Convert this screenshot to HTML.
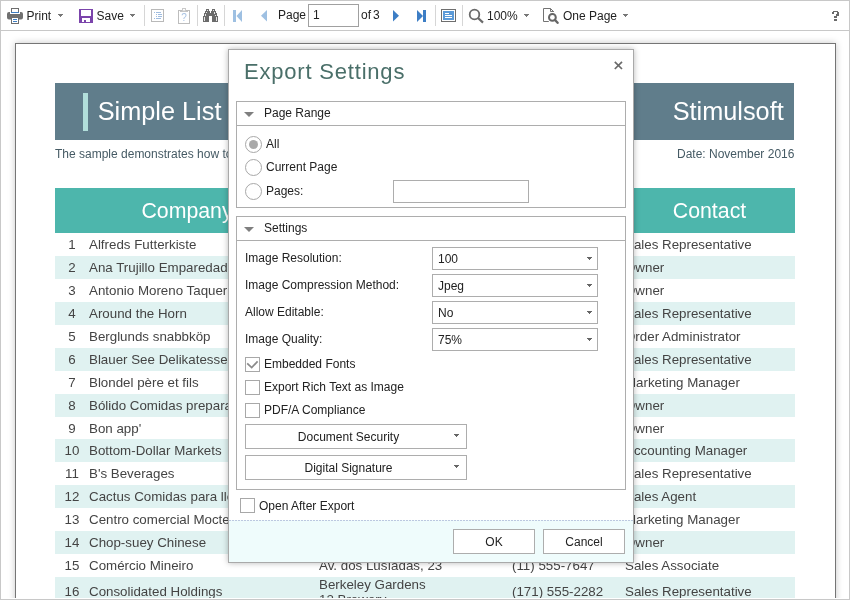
<!DOCTYPE html>
<html><head><meta charset="utf-8">
<style>
*{box-sizing:border-box;margin:0;padding:0}
html,body{width:850px;height:600px;overflow:hidden;background:#fff;font-family:"Liberation Sans",sans-serif}
body{will-change:transform}
.ab{position:absolute}
#frame{position:absolute;left:0;top:0;width:850px;height:600px;border:1px solid #c8c8c8;overflow:hidden}
#tbline{position:absolute;left:0;top:30px;width:850px;height:1px;background:#c8c8c8}
.t{position:absolute;font-size:12px;color:#222;white-space:nowrap;line-height:14px}
.sep{position:absolute;top:5px;width:1px;height:21px;background:#d6d6d6}
.dd{position:absolute;width:5px;height:1px;background:#777}
.dd::before{content:"";position:absolute;left:1px;top:1px;width:3px;height:1px;background:inherit}
.dd::after{content:"";position:absolute;left:2px;top:2px;width:1px;height:1px;background:inherit}
#clip{position:absolute;left:1px;top:31px;width:848px;height:567px;overflow:hidden}
#page{position:absolute;left:14px;top:12px;width:821px;height:700px;border:1px solid #757575;background:#fff;box-shadow:0 0 7px rgba(0,0,0,.22)}
.rt{position:absolute;white-space:nowrap}
.row{position:absolute;left:55px;width:740px;height:23px;font-size:13.33px;color:#444;line-height:23px}
.row span{position:absolute;top:0;white-space:nowrap}
.row .num{left:0;width:34px;text-align:center}
.row .c1{left:34px}
.row .c2{left:264px}
.row .c3{left:457px}
.row .c4{left:570px}
.alt{background:#e0f2f1}
.r16 span{top:7px;line-height:15px}
.r16 .two{top:-0.5px;line-height:15.4px}
#dlg{position:absolute;left:228px;top:49px;width:406px;height:514px;background:#fff;border:1px solid #a9a9a9;box-shadow:0 0 6px rgba(0,0,0,.28)}
.d{position:absolute;font-size:12px;color:#222;white-space:nowrap;line-height:14px}
.grp{position:absolute;border:1px solid #adadad}
.ghd{position:absolute;left:0;top:0;right:0;height:24px;border-bottom:1px solid #adadad}
.tri{position:absolute;width:0;height:0;border-left:5px solid transparent;border-right:5px solid transparent;border-top:5px solid #7f7f7f}
.radio{position:absolute;width:17px;height:17px;border:1px solid #a8a8a8;border-radius:50%;background:#fff}
.chk{position:absolute;width:15px;height:15px;border:1px solid #a8a8a8;background:#fff}
.sel{position:absolute;left:195px;width:166px;height:23px;border:1px solid #adadad;background:#fff}
.sel .d{left:5px;top:3.5px}
.sel .dd{left:154px;top:9px;background:#666}
.btn{position:absolute;border:1px solid #adadad;background:#fff}
</style></head>
<body>
<div id="frame"></div>
<div id="tbline"></div>
<!-- toolbar -->
<svg class="ab" style="left:0;top:0" width="850" height="30">
 <!-- printer -->
 <path d="M7 14 Q7 12 9 12 H10 V14 H20 V12 H21 Q23 12 23 14 V17.5 Q23 19.5 21 19.5 H9 Q7 19.5 7 17.5 Z" fill="#707070"/>
 <rect x="11.5" y="8.5" width="7" height="4" fill="#fff" stroke="#6e6e6e"/>
 <line x1="11" y1="12.5" x2="19" y2="12.5" stroke="#3f7ec2" stroke-width="1"/>
 <rect x="11.5" y="17.5" width="7" height="6" fill="#fff" stroke="#6e6e6e"/>
 <line x1="13" y1="19.5" x2="17" y2="19.5" stroke="#3f7ec2"/>
 <line x1="13" y1="21.5" x2="17" y2="21.5" stroke="#3f7ec2"/>
 <!-- save -->
 <g shape-rendering="crispEdges">
 <rect x="79" y="9" width="14" height="14" fill="#7b44ab"/>
 <rect x="81" y="10" width="10" height="6" fill="#fff"/>
 <rect x="82" y="18" width="8" height="4" fill="#fff"/>
 <rect x="84" y="20" width="2" height="2" fill="#7b44ab"/>
 </g>
 <!-- bookmarks disabled -->
 <rect x="151.5" y="9.5" width="12" height="12" fill="#fff" stroke="#b9b9b9"/>
 <g stroke="#9fbce0" stroke-width="1">
  <line x1="154" y1="12.5" x2="155" y2="12.5"/><line x1="156" y1="12.5" x2="161" y2="12.5"/>
  <line x1="156" y1="14.5" x2="157" y2="14.5"/><line x1="158" y1="14.5" x2="162" y2="14.5"/>
  <line x1="156" y1="16.5" x2="157" y2="16.5"/><line x1="158" y1="16.5" x2="162" y2="16.5"/>
  <line x1="154" y1="18.5" x2="155" y2="18.5"/><line x1="156" y1="18.5" x2="161" y2="18.5"/>
 </g>
 <!-- clipboard disabled -->
 <rect x="178.5" y="10.5" width="11" height="13" fill="#fff" stroke="#bdbdbd"/>
 <rect x="180" y="11" width="8" height="1" fill="#c4c4c4"/>
 <rect x="182.5" y="8.5" width="3" height="2.5" fill="#fff" stroke="#c9c9c9"/>
 <text x="184" y="21" font-size="10" fill="#a9c3e3" text-anchor="middle" font-family="Liberation Sans">?</text>
 <!-- binoculars -->
 <g fill="#6b6b6b" shape-rendering="crispEdges">
  <rect x="206" y="9" width="3" height="2"/>
  <rect x="205" y="11" width="5" height="2"/>
  <rect x="204" y="13" width="6" height="3"/>
  <rect x="203" y="16" width="6" height="6"/>
  <rect x="209" y="13" width="3" height="3"/>
  <rect x="212" y="9" width="3" height="2"/>
  <rect x="211" y="11" width="5" height="2"/>
  <rect x="211" y="13" width="6" height="3"/>
  <rect x="212" y="16" width="6" height="6"/>
 </g>
 <g fill="#e6e6e6" shape-rendering="crispEdges">
  <rect x="207" y="10" width="1" height="1"/>
  <rect x="206" y="12" width="1" height="1"/>
  <rect x="205" y="14" width="1" height="2"/>
  <rect x="204" y="17" width="1" height="4"/>
  <rect x="213" y="10" width="1" height="1"/>
  <rect x="214" y="12" width="1" height="2"/>
  <rect x="215" y="15" width="1" height="1"/>
  <rect x="216" y="17" width="1" height="4"/>
 </g>
 <!-- first / prev disabled -->
 <rect x="233" y="10" width="3" height="12" fill="#9ec0e2"/>
 <polygon points="242,10 242,22 236.5,16" fill="#9ec0e2"/>
 <polygon points="267,10 267,21.5 261,15.75" fill="#9ec0e2"/>
 <!-- next / last -->
 <polygon points="393,10 393,21.5 399,15.75" fill="#3d7ec5"/>
 <polygon points="417,10 417,22 423,16" fill="#3d7ec5"/>
 <rect x="423" y="10" width="3" height="12" fill="#3d7ec5"/>
 <!-- page view -->
 <rect x="441.5" y="9.5" width="14" height="12" fill="#fff" stroke="#6e6e6e"/>
 <rect x="443" y="11" width="11" height="9" fill="#5b9ad8"/>
 <g stroke="#fff"><line x1="445" y1="13.5" x2="449" y2="13.5"/><line x1="445" y1="15.5" x2="452" y2="15.5"/><line x1="445" y1="17.5" x2="452" y2="17.5"/></g>
 <!-- zoom -->
 <circle cx="474.5" cy="14.5" r="4.8" fill="none" stroke="#6a6a6a" stroke-width="1.8"/>
 <line x1="478" y1="18" x2="483" y2="22.6" stroke="#6a6a6a" stroke-width="2.2"/>
 <!-- one page -->
 <path d="M548.8 21.5 H543.5 V8.5 H550.5 L553.8 11.8" fill="none" stroke="#737373"/>
 <path d="M550.5 8.5 V11.5 H553.8" fill="none" stroke="#737373"/>
 <circle cx="552.4" cy="17.4" r="3.4" fill="none" stroke="#666" stroke-width="2"/>
 <line x1="555" y1="20" x2="557.6" y2="22.8" stroke="#666" stroke-width="2.4" stroke-linecap="round"/>
 <!-- help -->
 <g fill="#6a6a6a" shape-rendering="crispEdges"><rect x="833" y="11" width="5" height="1"/><rect x="832" y="12" width="2" height="2"/><rect x="837" y="12" width="2" height="3"/><rect x="836" y="14" width="3" height="2"/><rect x="834" y="16" width="3" height="2"/><rect x="834" y="19" width="3" height="2"/></g>
</svg>
<div class="t" style="left:26.5px;top:9px">Print</div>
<div class="dd" style="left:58px;top:14px"></div>
<div class="t" style="left:96.5px;top:9px">Save</div>
<div class="dd" style="left:130px;top:14px"></div>
<div class="sep" style="left:144px"></div>
<div class="sep" style="left:197px"></div>
<div class="sep" style="left:224px"></div>
<div class="t" style="left:278px;top:8px">Page</div>
<div class="ab" style="left:308px;top:4px;width:51px;height:23px;border:1px solid #a0a0a0;background:#fff"></div>
<div class="t" style="left:313px;top:8px">1</div>
<div class="t" style="left:361px;top:8px">of</div>
<div class="t" style="left:373px;top:8px">3</div>
<div class="sep" style="left:435px"></div>
<div class="sep" style="left:462px"></div>
<div class="t" style="left:487px;top:9px">100%</div>
<div class="dd" style="left:524px;top:14px"></div>
<div class="t" style="left:563px;top:9px">One Page</div>
<div class="dd" style="left:623px;top:14px"></div>

<div id="clip">
 <div id="page">
 </div>
</div>
<!-- report content in body coords, clipped -->
<div class="ab" style="left:16px;top:44px;width:819px;height:554px;overflow:hidden">
 <div class="ab" style="left:-16px;top:-44px;width:850px;height:642px">
  <div class="ab" style="left:55px;top:83px;width:739px;height:57px;background:#607d8b"></div>
  <div class="ab" style="left:83px;top:93px;width:5px;height:38px;background:#b2dfdb"></div>
  <div class="rt" style="left:97.7px;top:97px;font-size:25.3px;line-height:29px;color:#fff">Simple List</div>
  <div class="rt" style="left:672.7px;top:97px;font-size:25.3px;line-height:29px;color:#fff">Stimulsoft</div>
  <div class="rt" style="left:55px;top:147px;font-size:12px;line-height:14px;color:#455a64">The sample demonstrates how to create a simple list report.</div>
  <div class="rt" style="left:677px;top:147px;font-size:12px;line-height:14px;color:#455a64">Date: November 2016</div>
  <div class="ab" style="left:55px;top:188px;width:740px;height:45px;background:#4db6ac"></div>
  <div class="rt" style="left:55px;top:199px;width:264px;text-align:center;font-size:21.3px;line-height:25px;color:#fff">Company</div>
  <div class="rt" style="left:315px;top:199px;width:193px;text-align:center;font-size:21.3px;line-height:25px;color:#fff">Address</div>
  <div class="rt" style="left:508px;top:199px;width:116px;text-align:center;font-size:21.3px;line-height:25px;color:#fff">Phone</div>
  <div class="rt" style="left:624px;top:199px;width:171px;text-align:center;font-size:21.3px;line-height:25px;color:#fff">Contact</div>
<div class="row" style="top:233.07px"><span class="num">1</span><span class="c1">Alfreds Futterkiste</span><span class="c2">Obere Str. 57</span><span class="c3">030-0074321</span><span class="c4">Sales Representative</span></div>
<div class="row alt" style="top:256.0px"><span class="num">2</span><span class="c1">Ana Trujillo Emparedados y helados</span><span class="c2">Avda. de la Constitución 2222</span><span class="c3">(5) 555-4729</span><span class="c4">Owner</span></div>
<div class="row" style="top:278.93px"><span class="num">3</span><span class="c1">Antonio Moreno Taquería</span><span class="c2">Mataderos  2312</span><span class="c3">(5) 555-3932</span><span class="c4">Owner</span></div>
<div class="row alt" style="top:301.86px"><span class="num">4</span><span class="c1">Around the Horn</span><span class="c2">120 Hanover Sq.</span><span class="c3">(171) 555-7788</span><span class="c4">Sales Representative</span></div>
<div class="row" style="top:324.78999999999996px"><span class="num">5</span><span class="c1">Berglunds snabbköp</span><span class="c2">Berguvsvägen  8</span><span class="c3">0921-12 34 65</span><span class="c4">Order Administrator</span></div>
<div class="row alt" style="top:347.72px"><span class="num">6</span><span class="c1">Blauer See Delikatessen</span><span class="c2">Forsterstr. 57</span><span class="c3">0621-08460</span><span class="c4">Sales Representative</span></div>
<div class="row" style="top:370.65px"><span class="num">7</span><span class="c1">Blondel père et fils</span><span class="c2">24, place Kléber</span><span class="c3">88.60.15.31</span><span class="c4">Marketing Manager</span></div>
<div class="row alt" style="top:393.58px"><span class="num">8</span><span class="c1">Bólido Comidas preparadas</span><span class="c2">C/ Araquil, 67</span><span class="c3">(91) 555 22 82</span><span class="c4">Owner</span></div>
<div class="row" style="top:416.51px"><span class="num">9</span><span class="c1">Bon app'</span><span class="c2">12, rue des Bouchers</span><span class="c3">91.24.45.40</span><span class="c4">Owner</span></div>
<div class="row alt" style="top:439.44px"><span class="num">10</span><span class="c1">Bottom-Dollar Markets</span><span class="c2">23 Tsawassen Blvd.</span><span class="c3">(604) 555-4729</span><span class="c4">Accounting Manager</span></div>
<div class="row" style="top:462.37px"><span class="num">11</span><span class="c1">B's Beverages</span><span class="c2">Fauntleroy Circus</span><span class="c3">(171) 555-1212</span><span class="c4">Sales Representative</span></div>
<div class="row alt" style="top:485.29999999999995px"><span class="num">12</span><span class="c1">Cactus Comidas para llevar</span><span class="c2">Cerrito 333</span><span class="c3">(1) 135-5555</span><span class="c4">Sales Agent</span></div>
<div class="row" style="top:508.22999999999996px"><span class="num">13</span><span class="c1">Centro comercial Moctezuma</span><span class="c2">Sierras de Granada 9993</span><span class="c3">(5) 555-3392</span><span class="c4">Marketing Manager</span></div>
<div class="row alt" style="top:531.16px"><span class="num">14</span><span class="c1">Chop-suey Chinese</span><span class="c2">Hauptstr. 29</span><span class="c3">0452-076545</span><span class="c4">Owner</span></div>
<div class="row" style="top:554.0899999999999px"><span class="num">15</span><span class="c1">Comércio Mineiro</span><span class="c2">Av. dos Lusíadas, 23</span><span class="c3">(11) 555-7647</span><span class="c4">Sales Associate</span></div>
<div class="row alt r16" style="top:577.02px;height:34px"><span class="num">16</span><span class="c1">Consolidated Holdings</span><span class="c2 two">Berkeley Gardens<br>12 Brewery</span><span class="c3">(171) 555-2282</span><span class="c4">Sales Representative</span></div>
 </div>
</div>

<!-- dialog -->
<div id="dlg">
 <div class="rt" style="left:15px;top:9px;font-size:22px;line-height:26px;color:#4a6f69;letter-spacing:.8px">Export Settings</div>
 <svg class="ab" style="left:385px;top:11px" width="10" height="10"><path d="M0.8 0.8 L8 8 M8 0.8 L0.8 8" stroke="#6a6a6a" stroke-width="1.7"/></svg>
 <!-- group 1 -->
 <div class="grp" style="left:7px;top:51px;width:390px;height:107px">
  <div class="ghd"><div class="tri" style="left:7px;top:9.5px"></div><div class="d" style="left:27px;top:4px">Page Range</div></div>
  <div class="radio" style="left:8px;top:34px"><div class="ab" style="left:3px;top:3px;width:9px;height:9px;border-radius:50%;background:#a9a9a9"></div></div>
  <div class="d" style="left:29px;top:35px">All</div>
  <div class="radio" style="left:8px;top:57px"></div>
  <div class="d" style="left:29px;top:58px">Current Page</div>
  <div class="radio" style="left:8px;top:81px"></div>
  <div class="d" style="left:29px;top:82px">Pages:</div>
  <div class="ab" style="left:156px;top:78px;width:136px;height:23px;border:1px solid #adadad"></div>
 </div>
 <!-- group 2 -->
 <div class="grp" style="left:7px;top:166px;width:390px;height:274px">
  <div class="ghd"><div class="tri" style="left:7px;top:9.5px"></div><div class="d" style="left:27px;top:4px">Settings</div></div>
  <div class="d" style="left:8px;top:34px">Image Resolution:</div>
  <div class="sel" style="top:30px"><div class="d">100</div><div class="dd"></div></div>
  <div class="d" style="left:8px;top:61px">Image Compression Method:</div>
  <div class="sel" style="top:57px"><div class="d">Jpeg</div><div class="dd"></div></div>
  <div class="d" style="left:8px;top:88px">Allow Editable:</div>
  <div class="sel" style="top:84px"><div class="d">No</div><div class="dd"></div></div>
  <div class="d" style="left:8px;top:115px">Image Quality:</div>
  <div class="sel" style="top:111px"><div class="d">75%</div><div class="dd"></div></div>
  <div class="chk" style="left:8px;top:140px"><svg class="ab" style="left:0;top:0" width="14" height="14"><path d="M1.2 5.3 L5.7 9.6 L11.6 3.3" fill="none" stroke="#8a8a8a" stroke-width="1.7"/></svg></div>
  <div class="d" style="left:27px;top:140px">Embedded Fonts</div>
  <div class="chk" style="left:8px;top:163px"></div>
  <div class="d" style="left:27px;top:163px">Export Rich Text as Image</div>
  <div class="chk" style="left:8px;top:186px"></div>
  <div class="d" style="left:27px;top:186px">PDF/A Compliance</div>
  <div class="btn" style="left:8px;top:207px;width:222px;height:25px"><div class="d" style="left:0;width:205px;text-align:center;top:5px">Document Security</div><div class="dd" style="left:208px;top:9px;background:#666"></div></div>
  <div class="btn" style="left:8px;top:238px;width:222px;height:25px"><div class="d" style="left:0;width:205px;text-align:center;top:5px">Digital Signature</div><div class="dd" style="left:208px;top:9px;background:#666"></div></div>
 </div>
 <div class="chk" style="left:11px;top:448px"></div>
 <div class="d" style="left:30px;top:449px">Open After Export</div>
 <div class="ab" style="left:0;top:470px;width:404px;height:42px;background:#effcfc"></div><div class="ab" style="left:0;top:470px;width:404px;height:1px;background:repeating-linear-gradient(90deg,#bcc8e0 0 2px,transparent 2px 3px)"></div>
 <div class="btn" style="left:224px;top:479px;width:82px;height:25px"><div class="d" style="left:0;width:80px;text-align:center;top:5px">OK</div></div>
 <div class="btn" style="left:314px;top:479px;width:82px;height:25px"><div class="d" style="left:0;width:80px;text-align:center;top:5px">Cancel</div></div>
</div>
</body></html>
